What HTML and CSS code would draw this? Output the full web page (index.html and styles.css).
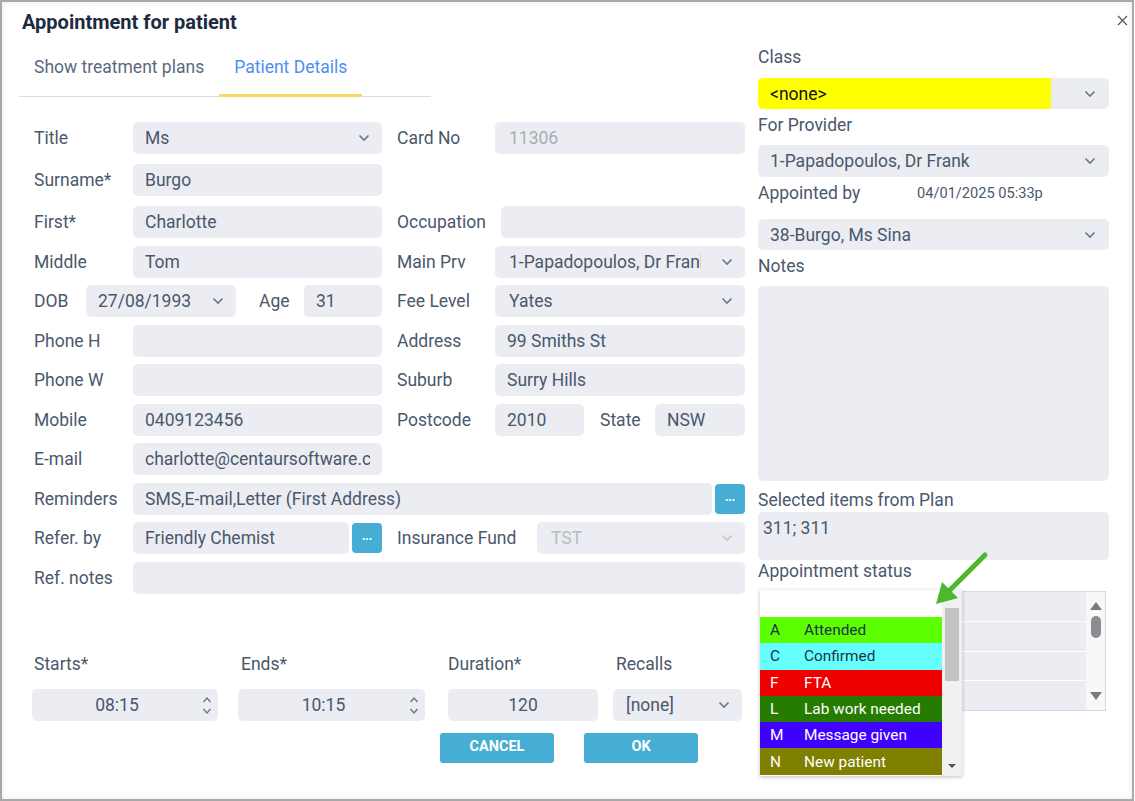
FILE: index.html
```html
<!DOCTYPE html>
<html lang="en">
  <head>
    <meta charset="UTF-8" />
    <title>Appointment for patient</title>
    <link rel="stylesheet" href="styles.css">
  </head>
  <body>
    <div class="dialog">
      <div class="dlg-head">
        <h1>Appointment for patient</h1>
        <svg class="close" width="11" height="11" viewBox="0 0 11 11">
          <path d="M1 1L10 10M10 1L1 10" stroke="#4a586c" stroke-width="1.2" />
        </svg>
      </div>

      <div class="dlg-body">
        <!-- left side: patient form -->
        <div class="left">
          <div class="tabs">
            <span class="tab">Show treatment plans</span>
            <span class="tab active">Patient Details</span>
          </div>

          <div class="form">
            <div class="row tall">
              <div class="half">
                <span class="lbl">Title</span>
                <div class="sel"><span class="txt">Ms</span><svg class="chev" viewBox="0 0 12 8"><path d="M1.5 1.5l4.5 4.5 4.5-4.5" /></svg></div>
              </div>
              <div class="half">
                <span class="lbl">Card No</span>
                <input class="inp dim" type="text" value="11306" readonly />
              </div>
            </div>
            <div class="row tall">
              <div class="half">
                <span class="lbl">Surname*</span>
                <input class="inp" type="text" value="Burgo" />
              </div>
              <div class="half"></div>
            </div>
            <div class="row">
              <div class="half">
                <span class="lbl">First*</span>
                <input class="inp" type="text" value="Charlotte" />
              </div>
              <div class="half">
                <span class="lbl wide">Occupation</span>
                <input class="inp" type="text" value="" />
              </div>
            </div>
            <div class="row">
              <div class="half">
                <span class="lbl">Middle</span>
                <input class="inp" type="text" value="Tom" />
              </div>
              <div class="half">
                <span class="lbl">Main Prv</span>
                <div class="sel"><span class="txt">1-Papadopoulos, Dr Frank</span><svg class="chev" viewBox="0 0 12 8"><path d="M1.5 1.5l4.5 4.5 4.5-4.5" /></svg></div>
              </div>
            </div>
            <div class="row">
              <div class="half">
                <span class="lbl dob">DOB</span>
                <div class="sel dob-sel"><span class="txt">27/08/1993</span><svg class="chev" viewBox="0 0 12 8"><path d="M1.5 1.5l4.5 4.5 4.5-4.5" /></svg></div>
                <span class="lbl age">Age</span>
                <input class="inp" type="text" value="31" />
              </div>
              <div class="half">
                <span class="lbl">Fee Level</span>
                <div class="sel"><span class="txt">Yates</span><svg class="chev" viewBox="0 0 12 8"><path d="M1.5 1.5l4.5 4.5 4.5-4.5" /></svg></div>
              </div>
            </div>
            <div class="row">
              <div class="half">
                <span class="lbl">Phone H</span>
                <input class="inp" type="text" value="" />
              </div>
              <div class="half">
                <span class="lbl">Address</span>
                <input class="inp" type="text" value="99 Smiths St" />
              </div>
            </div>
            <div class="row">
              <div class="half">
                <span class="lbl">Phone W</span>
                <input class="inp" type="text" value="" />
              </div>
              <div class="half">
                <span class="lbl">Suburb</span>
                <input class="inp" type="text" value="Surry Hills" />
              </div>
            </div>
            <div class="row">
              <div class="half">
                <span class="lbl">Mobile</span>
                <input class="inp" type="text" value="0409123456" />
              </div>
              <div class="half">
                <span class="lbl">Postcode</span>
                <input class="inp postcode" type="text" value="2010" />
                <span class="lbl state">State</span>
                <input class="inp" type="text" value="NSW" />
              </div>
            </div>
            <div class="row">
              <div class="half">
                <span class="lbl">E-mail</span>
                <input class="inp" type="text" value="charlotte@centaursoftware.com.au" />
              </div>
              <div class="half"></div>
            </div>
            <div class="row">
              <span class="lbl">Reminders</span>
              <input class="inp" type="text" value="SMS,E-mail,Letter (First Address)" />
              <button class="more">...</button>
            </div>
            <div class="row">
              <div class="half">
                <span class="lbl">Refer. by</span>
                <input class="inp" type="text" value="Friendly Chemist" />
                <button class="more">...</button>
              </div>
              <div class="half">
                <span class="lbl fund">Insurance Fund</span>
                <div class="sel off"><span class="txt">TST</span><svg class="chev" viewBox="0 0 12 8"><path d="M1.5 1.5l4.5 4.5 4.5-4.5" /></svg></div>
              </div>
            </div>
            <div class="row">
              <span class="lbl">Ref. notes</span>
              <input class="inp" type="text" value="" />
            </div>
          </div>

          <div class="times">
            <div class="tcol c-start">
              <span class="tlbl">Starts*</span>
              <div class="spin"><span class="txt">08:15</span><svg class="arrows" viewBox="0 0 10 24"><path d="M1.5 9l3.5-4 3.5 4M1.5 16l3.5 4 3.5-4" /></svg></div>
            </div>
            <div class="tcol c-end">
              <span class="tlbl">Ends*</span>
              <div class="spin"><span class="txt">10:15</span><svg class="arrows" viewBox="0 0 10 24"><path d="M1.5 9l3.5-4 3.5 4M1.5 16l3.5 4 3.5-4" /></svg></div>
            </div>
            <div class="tcol c-dur">
              <span class="tlbl">Duration*</span>
              <div class="spin"><span class="txt">120</span></div>
            </div>
            <div class="tcol c-rec">
              <span class="tlbl">Recalls</span>
              <div class="sel"><span class="txt">[none]</span><svg class="chev" viewBox="0 0 12 8"><path d="M1.5 1.5l4.5 4.5 4.5-4.5" /></svg></div>
            </div>
          </div>

          <div class="actions">
            <button class="btn">CANCEL</button>
            <button class="btn">OK</button>
          </div>
        </div>

        <!-- right side: appointment -->
        <div class="right">
          <div class="rlbl first">Class</div>
          <div class="sel rsel cls"><span class="yellow">&lt;none&gt;</span><svg class="chev" viewBox="0 0 12 8"><path d="M1.5 1.5l4.5 4.5 4.5-4.5" /></svg></div>

          <div class="rlbl">For Provider</div>
          <div class="sel rsel prov"><span class="txt">1-Papadopoulos, Dr Frank</span><svg class="chev" viewBox="0 0 12 8"><path d="M1.5 1.5l4.5 4.5 4.5-4.5" /></svg></div>

          <div class="rlbl appointed"><span class="by">Appointed by</span><span class="when">04/01/2025 05:33p</span></div>
          <div class="sel rsel byuser"><span class="txt">38-Burgo, Ms Sina</span><svg class="chev" viewBox="0 0 12 8"><path d="M1.5 1.5l4.5 4.5 4.5-4.5" /></svg></div>

          <div class="rlbl">Notes</div>
          <div class="notes"></div>

          <div class="rlbl plan-lbl">Selected items from Plan</div>
          <div class="plan">311; 311</div>

          <div class="rlbl status-lbl">Appointment status</div>
          <div class="status-wrap">
            <div class="listbox">
              <div class="lb-rows">
                <div class="lb-row"></div>
                <div class="lb-row"></div>
                <div class="lb-row"></div>
                <div class="lb-row"></div>
              </div>
              <div class="lb-scroll">
                <span class="tri up"></span>
                <span class="lb-thumb"></span>
                <span class="tri down"></span>
              </div>
            </div>

            <div class="dropdown">
              <div class="dd-items">
                <div class="dd-item blank"></div>
                <div class="dd-item st-a"><span class="code">A</span>Attended</div>
                <div class="dd-item st-c"><span class="code">C</span>Confirmed</div>
                <div class="dd-item st-f"><span class="code">F</span>FTA</div>
                <div class="dd-item st-l"><span class="code">L</span>Lab work needed</div>
                <div class="dd-item st-m"><span class="code">M</span>Message given</div>
                <div class="dd-item st-n"><span class="code">N</span>New patient</div>
              </div>
              <div class="dd-scroll">
                <span class="dd-thumb"></span>
                <span class="dd-down"></span>
              </div>
            </div>

            <svg class="pointer" width="64" height="64" viewBox="0 0 64 64">
              <path d="M55 7L17 45" stroke="#4cb82c" stroke-width="5" stroke-linecap="round" />
              <path d="M6 56L12 34L28 50Z" fill="#4cb82c" />
            </svg>
          </div>
        </div>
      </div>
    </div>
  </body>
</html>
```

FILE: styles.css
```css
/* page */
body {
  margin: 0;
  font-family: Roboto, "Liberation Sans", sans-serif;
  color: #4a586c;
  background: #ffffff;
}

.dialog {
  width: 1134px;
  height: 801px;
  box-sizing: border-box;
  border: 2px solid #a9a9a9;
  background: #ffffff;
  box-shadow: inset 0 0 6px rgba(0, 0, 0, 0.08);
  overflow: hidden;
}

/* header */
.dlg-head {
  display: flex;
  justify-content: space-between;
  align-items: flex-start;
  height: 43px;
  padding: 0 4px 0 20px;
}

.dlg-head h1 {
  margin: 9px 0 0;
  font-size: 20px;
  line-height: 22px;
  font-weight: 700;
  color: #1c2b3e;
}

.close {
  margin-top: 13px;
}

.dlg-body {
  display: flex;
  padding-left: 17px;
}

.left {
  width: 726px;
  flex: none;
}

.right {
  width: 351px;
  flex: none;
  margin-left: 13px;
}

/* tabs */
.tabs {
  display: flex;
  width: 412px;
  margin-top: 5px;
  border-bottom: 1px solid #dcdee2;
}

.tab {
  padding: 7px 15px 17px;
  font-size: 17.5px;
  line-height: 20px;
  color: #5a6a7e;
  border-bottom: 3px solid transparent;
  margin-bottom: -1px;
}

.tab.active {
  color: #4d8ff0;
  border-bottom-color: #f6d860;
}

/* form rows */
.form {
  display: flex;
  flex-direction: column;
  gap: 7.5px;
  margin-top: 25px;
  padding-left: 15px;
}

.row {
  display: flex;
  align-items: center;
  height: 32px;
}

.row.tall {
  margin-bottom: 2.5px;
}

.half {
  display: flex;
  align-items: center;
  width: 348px;
  height: 100%;
  flex: none;
}

.half + .half {
  margin-left: 15px;
}

.lbl {
  width: 99px;
  flex: none;
  font-size: 17.5px;
  line-height: 20px;
  white-space: nowrap;
}

.half + .half .lbl {
  width: 98px;
}

.half + .half .lbl.wide {
  width: 104px;
}

.half + .half .lbl.fund {
  width: 140px;
}

.lbl.dob {
  width: 52px;
}

.half .lbl.age {
  width: 45px;
  margin-left: 23px;
}

.half + .half .lbl.state {
  width: 55px;
  margin-left: 16px;
}

.inp {
  flex: 1;
  min-width: 0;
  width: 0;
  height: 32px;
  box-sizing: border-box;
  border: none;
  border-radius: 5px;
  background: #ebedf2;
  padding: 0 12px;
  font-family: Roboto, "Liberation Sans", sans-serif;
  font-size: 17.5px;
  color: #4a586c;
  outline: none;
}

.inp.dim {
  color: #a7acb4;
  padding-left: 14px;
}

.inp.postcode {
  flex: none;
  width: 89px;
}

.sel {
  flex: 1;
  min-width: 0;
  display: flex;
  align-items: center;
  height: 32px;
  box-sizing: border-box;
  border-radius: 5px;
  background: #ebedf2;
  padding: 0 12px 0 12px;
  font-size: 17.5px;
}

.sel .txt {
  flex: 1;
  min-width: 0;
  overflow: hidden;
  white-space: nowrap;
  margin-right: 20px;
}

.half + .half .sel {
  padding-left: 14px;
}

.dob-sel {
  flex: none;
  width: 150px;
}

.sel.off {
  color: #b8bcc3;
}

.chev {
  width: 12px;
  height: 8px;
  flex: none;
  fill: none;
  stroke: #6b7686;
  stroke-width: 1.6;
}

.sel.off .chev {
  stroke: #c4c8ce;
}

.more {
  flex: none;
  width: 30px;
  height: 30px;
  margin-left: 3px;
  border: none;
  border-radius: 4px;
  background: #46aed4;
  color: #ffffff;
  font-size: 12px;
  font-weight: 700;
  padding: 0 0 4px;
  line-height: 1;
}

/* start / end / duration */
.times {
  display: flex;
  margin: 60px 0 0 13px;
}

.tcol {
  display: flex;
  flex-direction: column;
  flex: none;
}

.tlbl {
  font-size: 17.5px;
  line-height: 20px;
  margin-bottom: 15px;
}

.c-start { width: 186px; }
.c-start .tlbl { padding-left: 2px; }
.c-end { width: 187px; margin-left: 20px; }
.c-end .tlbl { padding-left: 3px; }
.c-dur { width: 150px; margin-left: 23px; }
.c-rec { width: 129px; margin-left: 15px; }
.c-rec .tlbl { padding-left: 3px; }
.c-rec .sel { flex: none; padding-left: 13px; }

.spin {
  display: flex;
  align-items: center;
  height: 32px;
  border-radius: 5px;
  background: #ebedf2;
  padding: 0 6px 0 0;
  font-size: 17.5px;
}

.spin .txt {
  flex: 1;
  text-align: center;
}

.c-dur .spin {
  padding: 0;
}

.arrows {
  width: 10px;
  height: 24px;
  fill: none;
  stroke: #6b7686;
  stroke-width: 1.4;
}

.actions {
  display: flex;
  justify-content: flex-end;
  gap: 30px;
  margin-top: 12px;
  padding-right: 47px;
}

.btn {
  width: 114px;
  height: 30px;
  border: none;
  border-radius: 3px;
  background: #46aed4;
  color: #ffffff;
  font-family: Roboto, "Liberation Sans", sans-serif;
  font-size: 14.5px;
  font-weight: 700;
  padding: 0 0 2px;
}

/* right column */
.rlbl {
  font-size: 17.5px;
  line-height: 20px;
  margin-top: 6px;
}

.rlbl.first {
  margin-top: 2px;
}

.rsel {
  margin-top: 10px;
  padding: 0 13px 0 12px;
}

.rsel.cls {
  margin-top: 11px;
  height: 31px;
  padding-left: 0;
}

.yellow {
  width: 281px;
  flex: none;
  height: 100%;
  display: flex;
  align-items: center;
  padding-left: 12px;
  margin-right: auto;
  background: #ffff00;
  border-radius: 5px 0 0 5px;
  color: #111111;
  font-size: 17.5px;
}

.rsel.byuser {
  margin-top: 16px;
  height: 31px;
}

.appointed {
  display: flex;
  align-items: center;
}

.appointed .by {
  width: 159px;
}

.appointed .when {
  font-size: 14.6px;
}

.notes {
  margin-top: 10px;
  height: 195px;
  border-radius: 5px;
  background: #ebedf2;
}

.plan-lbl {
  margin-top: 9px;
}

.plan {
  margin-top: 2px;
  height: 48px;
  box-sizing: border-box;
  padding: 6px 5px;
  border-radius: 5px;
  background: #ebedf2;
  font-size: 17.5px;
  line-height: 20px;
}

.status-lbl {
  margin-top: 1px;
}

/* status list and its open dropdown */
.status-wrap {
  position: relative;
  margin-top: 10px;
}

.listbox {
  display: flex;
  width: 346px;
  height: 120px;
  margin-left: 2px;
  box-sizing: border-box;
  border: 1px solid #d6d9de;
  background: #ebedf2;
}

.lb-rows {
  flex: 1;
  display: flex;
  flex-direction: column;
}

.lb-row {
  flex: 1;
  border-bottom: 1px solid #ffffff;
}

.lb-row:last-child {
  border-bottom: none;
}

.lb-scroll {
  width: 19px;
  background: #f8f8f8;
  display: flex;
  flex-direction: column;
  align-items: center;
  padding-top: 10px;
  box-sizing: border-box;
}

.tri {
  width: 0;
  height: 0;
  border-left: 6px solid transparent;
  border-right: 6px solid transparent;
}

.tri.up {
  border-bottom: 8px solid #777b80;
}

.tri.down {
  border-top: 8px solid #777b80;
  margin-top: auto;
  margin-bottom: 10px;
}

.lb-thumb {
  width: 10px;
  height: 22px;
  margin-top: 6px;
  border-radius: 5px;
  background: #8a8d91;
}

.dropdown {
  position: absolute;
  left: 2px;
  top: -1px;
  width: 202px;
  height: 186px;
  display: flex;
  background: #ffffff;
  box-shadow: 0 1px 4px rgba(0, 0, 0, 0.25);
}

.dd-items {
  width: 182px;
}

.dd-item {
  height: 26.3px;
  display: flex;
  align-items: center;
  font-size: 15.4px;
  color: #ffffff;
}

.dd-item.blank {
  height: 27px;
}

.dd-item .code {
  width: 34px;
  padding-left: 10px;
  flex: none;
}

.st-a { background: #5cff00; color: #1e3346; }
.st-c { background: #66ffff; color: #1e3346; }
.st-f { background: #ee0000; }
.st-l { background: #267c00; }
.st-m { background: #4000ff; }
.st-n { background: #808000; }

.dd-scroll {
  width: 20px;
  background: #f1f1f1;
  display: flex;
  flex-direction: column;
  align-items: center;
}

.dd-thumb {
  width: 14px;
  height: 73px;
  margin-top: 18px;
  background: #c3c3c3;
}

.dd-down {
  width: 0;
  height: 0;
  margin-top: auto;
  margin-bottom: 8px;
  border-left: 4px solid transparent;
  border-right: 4px solid transparent;
  border-top: 4px solid #505050;
}

.pointer {
  position: absolute;
  left: 172px;
  top: -43px;
}
```
